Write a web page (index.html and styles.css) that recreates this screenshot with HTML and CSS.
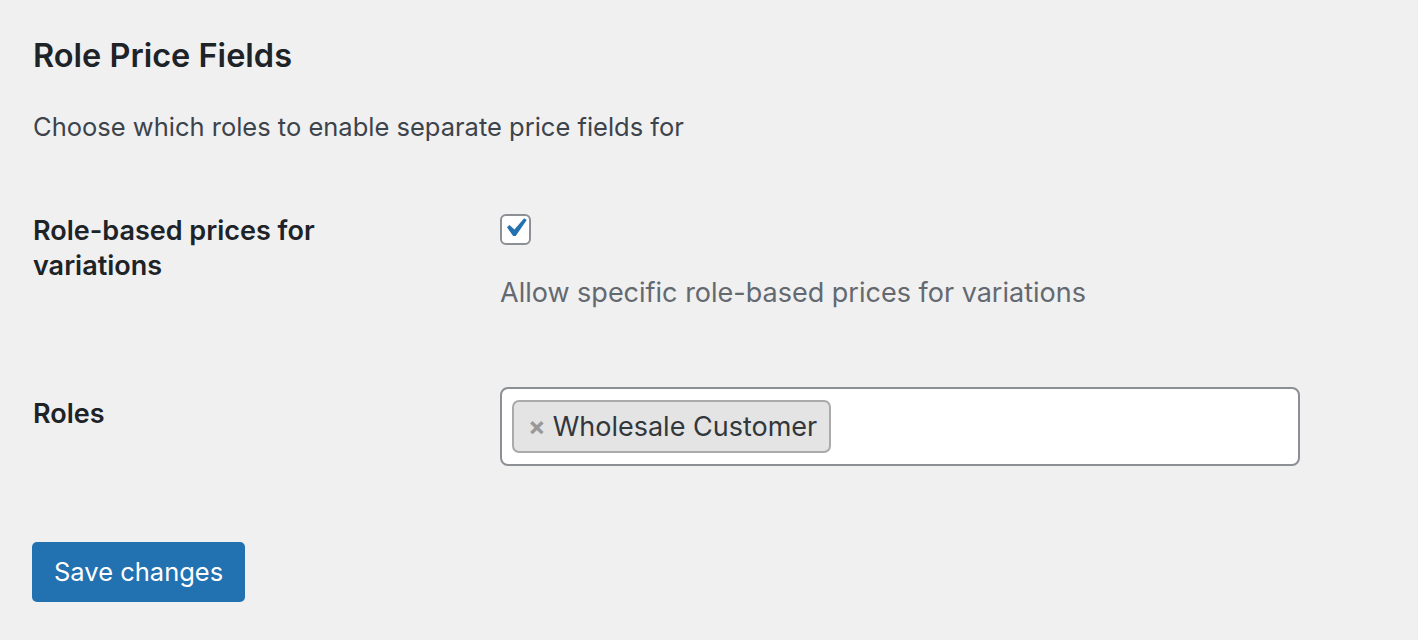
FILE: index.html
```html
<!DOCTYPE html>
<html>
<head lang="en">
    <meta charset="UTF-8">
    <title>Role Price Fields</title>
    <link rel="stylesheet" href="styles.css">
</head>
<body>
<div class="wrap">
    <h2 class="title">Role Price Fields</h2>
    <p class="intro">Choose which roles to enable separate price fields for</p>

    <div class="form-table">
        <div class="row">
            <div class="th">Role-based prices for variations</div>
            <div class="td">
                <label class="check">
                    <svg width="38" height="38" viewBox="0 0 20 20">
                        <path d="M14.83 4.89l1.34.94-5.81 8.38H9.02L5.78 9.67l1.34-1.25 2.57 2.4z" fill="#2271b1"/>
                    </svg>
                </label>
                <p class="description">Allow specific role-based prices for variations</p>
            </div>
        </div>
        <div class="row">
            <div class="th roles-th">Roles</div>
            <div class="td">
                <div class="select">
                    <span class="choice"><span class="remove">×</span>Wholesale Customer</span>
                </div>
            </div>
        </div>
    </div>

    <div class="submit">
        <a class="button-primary">Save changes</a>
    </div>
</div>
</body>
</html>
```

FILE: styles.css
```css
* {
    margin: 0;
    padding: 0;
    box-sizing: border-box;
}

body {
    background: #f0f0f1;
    color: #1d2327;
    font-family: Inter, "Noto Sans", sans-serif;
    font-size: 25.5px;
}

.wrap {
    padding: 38px 0 0 33px;
}

.title {
    font-size: 32.5px;
    font-weight: 600;
    line-height: 36px;
}

.intro {
    margin-top: 35px;
    color: #3c434a;
    line-height: 36px;
}

.form-table {
    margin-top: 54px;
}

.row {
    display: flex;
}

.th {
    width: 467px;
    flex-shrink: 0;
    padding-right: 120px;
    font-size: 27px;
    font-weight: 600;
    line-height: 35px;
    padding-top: 14px;
}

.row + .row {
    margin-top: 76px;
}

.roles-th {
    padding-top: 9px;
}

.check {
    display: flex;
    align-items: center;
    justify-content: center;
    width: 31px;
    height: 31px;
    margin-top: 15px;
    background: #fff;
    border: 2px solid #8c8f94;
    border-radius: 6px;
    overflow: visible;
}

.check svg {
    flex-shrink: 0;
    margin: -4px 0 0 -1px;
}

.description {
    margin-top: 30px;
    font-size: 27px;
    color: #646970;
    line-height: 36px;
}

.select {
    width: 800px;
    height: 79px;
    padding: 11px 11px 11px 10px;
    background: #fff;
    border: 2px solid #8c8f94;
    border-radius: 8px;
}

.choice {
    display: inline-flex;
    align-items: center;
    height: 53px;
    padding: 0 12px 0 14px;
    background: #e4e4e4;
    border: 2px solid #aaa;
    border-radius: 7px;
    color: #32373c;
    font-size: 27px;
}

.remove {
    color: #999;
    font-weight: 700;
    font-size: 26px;
    margin-right: 7px;
}

.submit {
    margin-top: 76px;
}

.button-primary {
    display: inline-block;
    height: 60px;
    line-height: 60px;
    padding: 0 22px;
    margin-left: -1px;
    background: #2271b1;
    border-radius: 5px;
    color: #fff;
}
```
